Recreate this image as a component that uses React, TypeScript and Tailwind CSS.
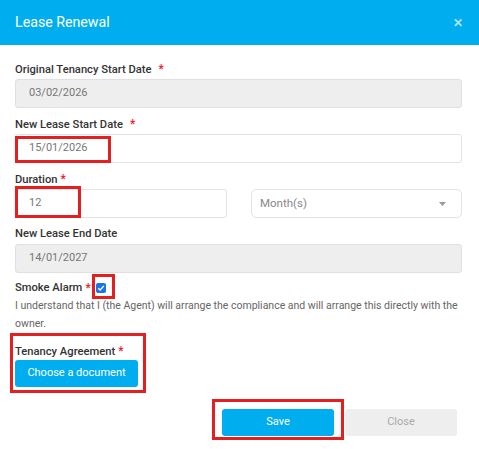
import React from "react";

const font = { fontFamily: "Roboto, 'Liberation Sans', sans-serif" };

function Label({ text, star = true, gap = true }: { text: string; star?: boolean; gap?: boolean }) {
    return (
        <div className="h-[16px] text-[11.2px] leading-[16px] font-medium text-[#333]">
            {text}
            {star && <span className={`text-[#e8212b] text-[12px] ${gap ? "ml-[7px]" : "ml-[3px]"}`}>*</span>}
        </div>
    );
}

function Input({ value, disabled = false }: { value: string; disabled?: boolean }) {
    return (
        <div
            className={`h-[29px] flex items-center px-[13px] rounded-[3px] border text-[11px] text-[#777] ${
                disabled ? "bg-[#eeeeee] border-[#e0e0e0]" : "bg-white border-[#e3e3e3]"
            }`}
        >
            {value}
        </div>
    );
}

function RedBox({ className }: { className: string }) {
    return <div className={`absolute border-[3px] border-[#e3201f] pointer-events-none ${className}`} />;
}

export default function App() {
    return (
        <div className="relative w-[479px] h-[449px] bg-white overflow-hidden" style={font}>
            <div className="h-[45px] bg-[#00aeef] flex items-center justify-between pl-[15px] pr-[16px]">
                <span className="text-white text-[14.2px]">Lease Renewal</span>
                <span className="text-white/70 text-[12px] font-bold leading-none">✕</span>
            </div>

            <div className="px-[15px] pr-[17px] pt-[16px]">
                <div className="mb-[8px]">
                    <Label text="Original Tenancy Start Date" />
                    <div className="mt-[2px]">
                        <Input value="03/02/2026" disabled />
                    </div>
                </div>
                <div className="mb-[8px]">
                    <Label text="New Lease Start Date" />
                    <div className="mt-[2px]">
                        <Input value="15/01/2026" />
                    </div>
                </div>
                <div className="mb-[8px]">
                    <Label text="Duration" gap={false} />
                    <div className="mt-[2px] flex gap-[24px]">
                        <div className="w-[212px]">
                            <Input value="12" />
                        </div>
                        <div className="flex-1 h-[29px] flex items-center justify-between px-[8px] pr-[15px] rounded-[5px] border border-[#e3e3e3] text-[11.5px] text-[#888]">
                            <span>Month(s)</span>
                            <svg width="7" height="4" viewBox="0 0 7 4">
                                <path d="M0 0h7L3.5 4z" fill="#999" />
                            </svg>
                        </div>
                    </div>
                </div>
                <div>
                    <Label text="New Lease End Date" star={false} />
                    <div className="mt-[2px]">
                        <Input value="14/01/2027" disabled />
                    </div>
                </div>

                <div className="mt-[7px] flex items-center h-[16px] text-[11.2px] font-medium text-[#333]">
                    Smoke Alarm
                    <span className="text-[#e8212b] text-[12px] ml-[3px]">*</span>
                    <span className="ml-[5px] w-[10px] h-[10px] rounded-[2px] bg-[#1a73e8] flex items-center justify-center">
                        <svg width="8" height="8" viewBox="0 0 8 8">
                            <path d="M1.3 4.2l1.8 1.8L6.8 2" stroke="white" strokeWidth="1.3" fill="none" />
                        </svg>
                    </span>
                </div>
                <p className="mt-[1px] text-[10.5px] leading-[18px] text-[#666]">
                    I understand that I (the Agent) will arrange the compliance and will arrange this directly with
                    the owner.
                </p>

                <div className="mt-[10px]">
                    <Label text="Tenancy Agreement" gap={false} />
                    <button className="mt-0 h-[27px] w-[123px] rounded-[3px] bg-[#00aeef] text-white text-[11px]">
                        Choose a document
                    </button>
                </div>

                <div className="mt-[22px] flex justify-end gap-[11px] pr-[5px]">
                    <button className="h-[27px] w-[112px] rounded-[3px] bg-[#00aeef] text-white text-[11px]">
                        Save
                    </button>
                    <button className="h-[27px] w-[112px] rounded-[3px] bg-[#eeeeee] text-[#aaa] text-[11px]">
                        Close
                    </button>
                </div>
            </div>

            <RedBox className="left-[15px] top-[136px] w-[96px] h-[27px]" />
            <RedBox className="left-[15px] top-[186px] w-[66px] h-[32px]" />
            <RedBox className="left-[92px] top-[274px] w-[23px] h-[25px]" />
            <RedBox className="left-[10px] top-[333px] w-[136px] h-[60px]" />
            <RedBox className="left-[212px] top-[399px] w-[132px] h-[41px]" />
        </div>
    );
}
